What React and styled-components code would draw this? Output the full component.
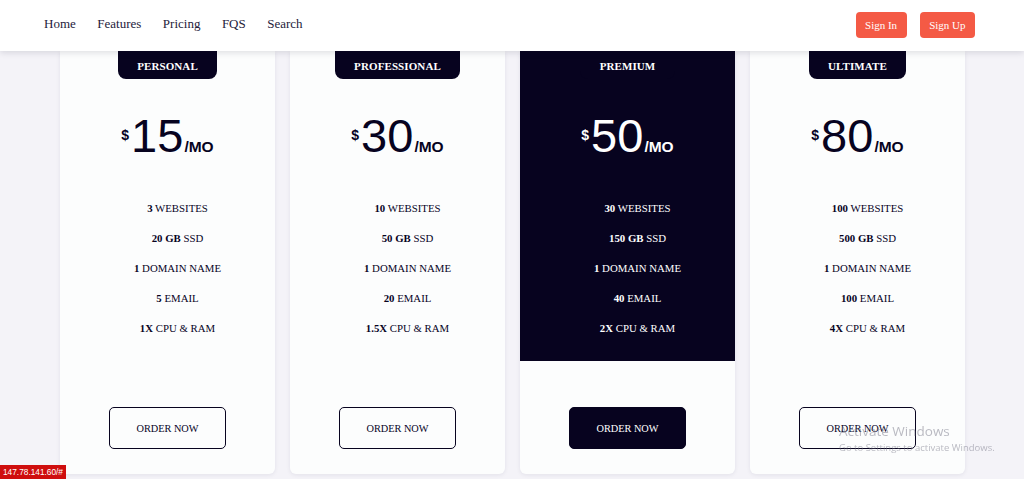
import React from 'react';
import styled, { createGlobalStyle } from 'styled-components';

const navy = '#07031f';
const coral = '#f45a45';

const GlobalStyle = createGlobalStyle`
  html, body {
    margin: 0;
    padding: 0;
    background: #f4f3f8;
    font-family: "Liberation Serif", "Times New Roman", serif;
    color: ${navy};
    height: 100%;
    overflow: hidden;
  }
`;

const Header = styled.header`
  position: relative;
  z-index: 2;
  height: 51px;
  background: #fff;
  box-shadow: 0 2px 6px rgba(20, 20, 40, 0.12);
  display: flex;
  align-items: center;
  justify-content: space-between;
  padding: 0 49px 0 44px;
`;

const Nav = styled.nav`
  display: flex;
  gap: 21.5px;
  margin-top: -4px;
`;

const NavLink = styled.a`
  font-size: 13px;
  color: #24213b;
  text-decoration: none;
`;

const Actions = styled.div`
  display: flex;
  gap: 13px;
  margin-top: -2px;
`;

const HeaderButton = styled.button`
  height: 26px;
  padding: 0 9.5px;
  border: none;
  border-radius: 4px;
  background: ${coral};
  color: #fff;
  font-family: "Liberation Serif", serif;
  font-size: 11px;
`;

const Cards = styled.main`
  display: grid;
  grid-template-columns: repeat(4, 215px);
  gap: 15px;
  justify-content: center;
  padding-left: 1px;
`;

const Card = styled.section`
  height: 423px;
  background: #fcfdfd;
  border-radius: 0 0 6px 6px;
  box-shadow: 0 1px 4px rgba(20, 20, 60, 0.08);
  display: flex;
  flex-direction: column;
  align-items: center;
  overflow: hidden;
`;

const Top = styled.div`
  align-self: stretch;
  height: 310px;
  display: flex;
  flex-direction: column;
  align-items: center;
  background: ${(p) => (p.$dark ? navy : 'transparent')};
  color: ${(p) => (p.$dark ? '#fff' : navy)};
`;

const Badge = styled.div`
  height: 28px;
  padding: 0 19.5px;
  border-radius: 0 0 8px 8px;
  background: ${navy};
  color: #fff;
  font-size: 11px;
  font-weight: bold;
  line-height: 31px;
  letter-spacing: 0.1px;
`;

const Price = styled.div`
  margin-top: 27px;
  display: flex;
  align-items: baseline;
  font-family: "Liberation Sans", Arial, sans-serif;
  height: 60px;
`;

const Dollar = styled.span`
  font-size: 14px;
  font-weight: bold;
  position: relative;
  top: -12px;
  margin-right: 2px;
`;

const Amount = styled.span`
  font-size: 47px;
  line-height: 60px;
`;

const Per = styled.span`
  font-size: 15.5px;
  font-weight: bold;
  margin-left: 1px;
`;

const Features = styled.ul`
  list-style: none;
  margin: 35px 0 0;
  padding: 0 0 0 20px;
  display: flex;
  flex-direction: column;
  gap: 16px;
`;

const Feature = styled.li`
  font-size: 10.8px;
  line-height: 14px;
  text-align: center;
  b {
    font-weight: bold;
  }
`;

const OrderButton = styled.button`
  margin-top: 46px;
  width: 117px;
  height: 42px;
  border: 1.5px solid ${navy};
  border-radius: 5px;
  background: ${(p) => (p.$dark ? navy : 'transparent')};
  color: ${(p) => (p.$dark ? '#fff' : navy)};
  font-family: "Liberation Serif", serif;
  font-size: 10.3px;
`;

const StatusBar = styled.div`
  position: fixed;
  left: 0;
  bottom: 0;
  height: 14px;
  padding: 0 3px;
  background: #cf0e0e;
  color: #fff;
  font-family: "Liberation Sans", Arial, sans-serif;
  font-size: 8.3px;
  line-height: 14px;
`;

const Watermark = styled.div`
  position: fixed;
  left: 839px;
  top: 422px;
  color: rgba(120, 120, 135, 0.5);
  font-family: "Open Sans", "DejaVu Sans", sans-serif;
  pointer-events: none;
  p {
    margin: 0;
  }
  p:first-child {
    font-size: 13.5px;
  }
  p:last-child {
    font-size: 9.5px;
    margin-top: 1px;
  }
`;

const plans = [
  { name: 'PERSONAL', price: 15, f: ['3', '20 GB', '1', '5', '1X'] },
  { name: 'PROFESSIONAL', price: 30, f: ['10', '50 GB', '1', '20', '1.5X'] },
  { name: 'PREMIUM', price: 50, f: ['30', '150 GB', '1', '40', '2X'], dark: true },
  { name: 'ULTIMATE', price: 80, f: ['100', '500 GB', '1', '100', '4X'] },
];

const labels = ['WEBSITES', 'SSD', 'DOMAIN NAME', 'EMAIL', 'CPU & RAM'];

export default function App() {
  return (
    <>
      <GlobalStyle />
      <Header>
        <Nav>
          {['Home', 'Features', 'Pricing', 'FQS', 'Search'].map((n) => (
            <NavLink key={n} href="#">{n}</NavLink>
          ))}
        </Nav>
        <Actions>
          <HeaderButton>Sign In</HeaderButton>
          <HeaderButton>Sign Up</HeaderButton>
        </Actions>
      </Header>
      <Cards>
        {plans.map((p) => (
          <Card key={p.name}>
            <Top $dark={p.dark}>
              <Badge>{p.name}</Badge>
              <Price>
                <Dollar>$</Dollar>
                <Amount>{p.price}</Amount>
                <Per>/MO</Per>
              </Price>
              <Features>
                {p.f.map((v, i) => (
                  <Feature key={i}>
                    <b>{v}</b> {labels[i]}
                  </Feature>
                ))}
              </Features>
            </Top>
            <OrderButton $dark={p.dark}>ORDER NOW</OrderButton>
          </Card>
        ))}
      </Cards>
      <Watermark>
        <p>Activate Windows</p>
        <p>Go to Settings to activate Windows.</p>
      </Watermark>
      <StatusBar>147.78.141.60/#</StatusBar>
    </>
  );
}
